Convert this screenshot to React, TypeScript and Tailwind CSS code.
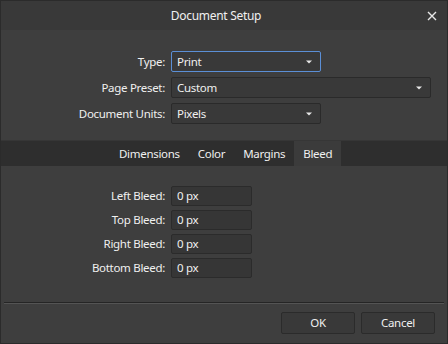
import React from "react";

function Caret() {
  return (
    <svg width="6" height="4" viewBox="0 0 6 4" className="shrink-0">
      <path d="M0 0.5h6L3 3.5z" fill="#e8e8e8" />
    </svg>
  );
}

function Select({ value, width, focused }: { value: string; width: string; focused?: boolean }) {
  return (
    <div
      className={`${width} h-[21px] flex items-center justify-between pl-[5px] pr-[8px] rounded-[2px] border bg-[#393939] ${
        focused ? "border-[#5b8fd6]" : "border-[#2a2a2a]"
      }`}
    >
      <span>{value}</span>
      <Caret />
    </div>
  );
}

const tabs = ["Dimensions", "Color", "Margins", "Bleed"];
const bleeds = ["Left Bleed:", "Top Bleed:", "Right Bleed:", "Bottom Bleed:"];

export default function App() {
  return (
    <div
      className="w-[448px] h-[344px] bg-[#3e3e3e] border border-[#2b2b2b] flex flex-col text-[11.5px] tracking-[-0.3px] text-[#f0f0f0]"
      style={{ fontFamily: '"Noto Sans", "Open Sans", sans-serif' }}
    >
      <div className="h-[29px] bg-[#393939] flex items-center justify-center relative shrink-0 pr-[16px]">
        <span className="text-[12px] text-[#f0f0f0]">Document Setup</span>
        <svg
          width="10"
          height="10"
          viewBox="0 0 10 10"
          className="absolute right-[10px] top-[10px]"
        >
          <path d="M1 1l8 8M9 1l-8 8" stroke="#e8e8e8" strokeWidth="1.4" />
        </svg>
      </div>

      <div className="flex flex-col gap-[5px] pt-[21px]">
        <div className="flex items-center">
          <span className="w-[170px] text-right pr-[6px]">Type:</span>
          <Select value="Print" width="w-[150px]" focused />
        </div>
        <div className="flex items-center">
          <span className="w-[170px] text-right pr-[6px]">Page Preset:</span>
          <Select value="Custom" width="w-[260px]" />
        </div>
        <div className="flex items-center">
          <span className="w-[170px] text-right pr-[6px]">Document Units:</span>
          <Select value="Pixels" width="w-[150px]" />
        </div>
      </div>

      <div className="mt-[16px] h-[26px] bg-[#2e2e2e] border-t border-[#363636] flex items-stretch pl-[109px]">
        {tabs.map((t) => (
          <div
            key={t}
            className={`flex items-center px-[9px] ${
              t === "Bleed" ? "bg-[#3b3b3b]" : ""
            }`}
          >
            {t}
          </div>
        ))}
      </div>

      <div className="flex flex-col gap-[4px] pt-[20px]">
        {bleeds.map((b) => (
          <div key={b} className="flex items-center">
            <span className="w-[170px] text-right pr-[6px]">{b}</span>
            <div className="w-[81px] h-[20px] bg-[#363636] border border-[#2b2b2b] rounded-[2px] flex items-center pl-[5px]">
              0 px
            </div>
          </div>
        ))}
      </div>

      <div className="mx-[3px] mt-[24px] border-t border-[#252525] border-b border-b-[#545454]" />

      <div className="flex justify-end gap-[6px] pr-[12px] pt-[8px]">
        <div className="w-[74px] h-[22px] bg-[#393939] border border-[#2b2b2b] rounded-[2px] flex items-center justify-center">
          OK
        </div>
        <div className="w-[74px] h-[22px] bg-[#393939] border border-[#2b2b2b] rounded-[2px] flex items-center justify-center">
          Cancel
        </div>
      </div>
    </div>
  );
}
